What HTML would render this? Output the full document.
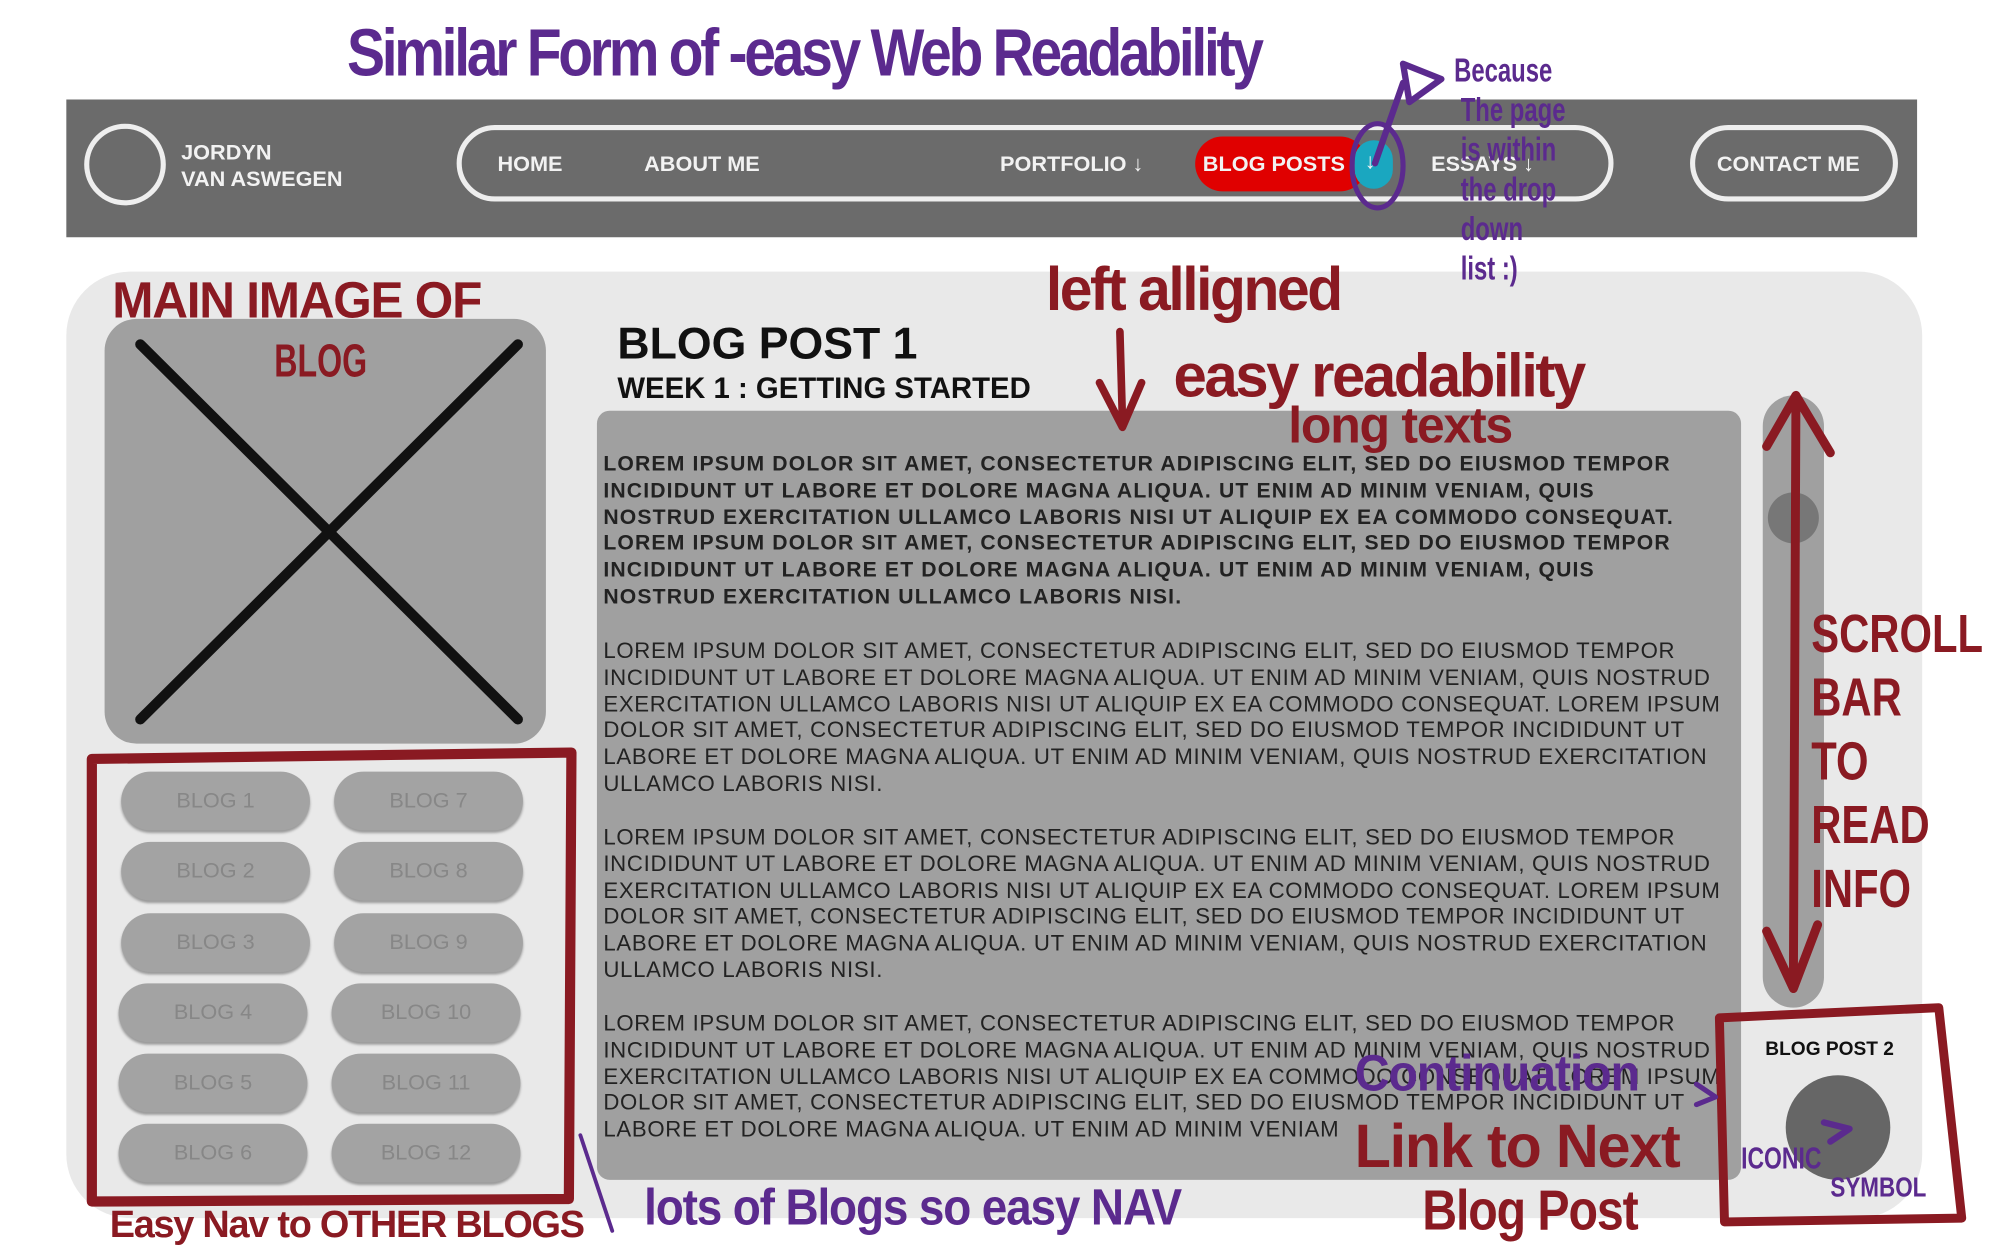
<!DOCTYPE html>
<html><head><meta charset="utf-8"><style>
html,body{margin:0;padding:0;background:#fff;width:2000px;height:1250px;overflow:hidden}
#s{position:absolute;left:0;top:0;width:1568px;height:980px;transform:scale(1.27551);transform-origin:0 0;font-family:"Liberation Sans",sans-serif}
.a{position:absolute}
.nav{left:52px;top:78px;width:1451px;height:108px;background:#6b6b6b}
.w{color:#f2f2f2;font-weight:bold;font-size:17px}
.pill{border:4px solid #eee;border-radius:32px;box-sizing:border-box}
.btn{width:148px;height:46px;background:#a3a3a3;border-radius:23px;color:#878787;font-size:17px;text-align:center;line-height:46px;box-shadow:0 2px 2px #999}
.txt{font-size:17.4px;line-height:20.8px;color:#222;text-transform:uppercase;letter-spacing:0.55px;white-space:nowrap}
.tb{font-size:16.6px;line-height:20.8px;color:#222;text-transform:uppercase;font-weight:bold;letter-spacing:0.9px;white-space:nowrap}
.p{color:#5b2a8e;font-weight:bold;transform-origin:0 0;white-space:nowrap}
.r{color:#8a1a22;font-weight:bold;transform-origin:0 0;white-space:nowrap}
</style></head><body><div id="s">
<div class="a nav"></div>
<div class="a" style="left:66px;top:97px;width:56px;height:56px;border:4px solid #eee;border-radius:50%"></div>
<div class="a w" style="left:142px;top:109px;line-height:21px">JORDYN<br>VAN ASWEGEN</div>
<div class="a pill" style="left:358px;top:98px;width:907px;height:60px"></div>
<div class="a w" style="left:390px;top:119px">HOME</div>
<div class="a w" style="left:505px;top:119px">ABOUT ME</div>
<div class="a w" style="left:784px;top:119px">PORTFOLIO ↓</div>
<div class="a" style="left:937px;top:107px;width:135px;height:43px;background:#e00000;border-radius:22px"></div>
<div class="a" style="left:1062px;top:110px;width:30px;height:38px;background:#1aa7c0;border-radius:15px"></div>
<div class="a w" style="left:943px;top:119px">BLOG POSTS</div>
<div class="a w" style="left:1070px;top:117px">↓</div>
<div class="a w" style="left:1122px;top:119px">ESSAYS ↓</div>
<div class="a pill" style="left:1325px;top:98px;width:163px;height:60px"></div>
<div class="a w" style="left:1346px;top:119px">CONTACT ME</div>

<div class="a" style="left:52px;top:213px;width:1455px;height:742px;background:#e9e9e9;border-radius:50px"></div>
<div class="a" style="left:82px;top:250px;width:346px;height:333px;background:#a0a0a0;border-radius:25px"></div>
<svg class="a" style="left:0;top:0" width="1568" height="980">
<line x1="110" y1="270" x2="406" y2="564" stroke="#111" stroke-width="8" stroke-linecap="round"/>
<line x1="406" y1="270" x2="110" y2="564" stroke="#111" stroke-width="8" stroke-linecap="round"/>
</svg>
<div class="a btn" style="left:95px;top:605px">BLOG 1</div><div class="a btn" style="left:262px;top:605px">BLOG 7</div>
<div class="a btn" style="left:95px;top:660px">BLOG 2</div><div class="a btn" style="left:262px;top:660px">BLOG 8</div>
<div class="a btn" style="left:95px;top:716px">BLOG 3</div><div class="a btn" style="left:262px;top:716px">BLOG 9</div>
<div class="a btn" style="left:93px;top:771px">BLOG 4</div><div class="a btn" style="left:260px;top:771px">BLOG 10</div>
<div class="a btn" style="left:93px;top:826px">BLOG 5</div><div class="a btn" style="left:260px;top:826px">BLOG 11</div>
<div class="a btn" style="left:93px;top:881px">BLOG 6</div><div class="a btn" style="left:260px;top:881px">BLOG 12</div>

<div class="a" style="left:484px;top:250px;font-size:35px;font-weight:bold;color:#111">BLOG POST 1</div>
<div class="a" style="left:484px;top:291px;font-size:23px;font-weight:bold;color:#111">WEEK 1 : GETTING STARTED</div>
<div class="a" style="left:468px;top:322px;width:897px;height:603px;background:#a0a0a0;border-radius:10px"></div>
<div class="a tb" style="left:473px;top:354px">Lorem ipsum dolor sit amet, consectetur adipiscing elit, sed do eiusmod tempor<br>incididunt ut labore et dolore magna aliqua. Ut enim ad minim veniam, quis<br>nostrud exercitation ullamco laboris nisi ut aliquip ex ea commodo consequat.<br>Lorem ipsum dolor sit amet, consectetur adipiscing elit, sed do eiusmod tempor<br>incididunt ut labore et dolore magna aliqua. Ut enim ad minim veniam, quis<br>nostrud exercitation ullamco laboris nisi.</div>
<div class="a txt" style="left:473px;top:500px">Lorem ipsum dolor sit amet, consectetur adipiscing elit, sed do eiusmod tempor<br>incididunt ut labore et dolore magna aliqua. Ut enim ad minim veniam, quis nostrud<br>exercitation ullamco laboris nisi ut aliquip ex ea commodo consequat. Lorem ipsum<br>dolor sit amet, consectetur adipiscing elit, sed do eiusmod tempor incididunt ut<br>labore et dolore magna aliqua. Ut enim ad minim veniam, quis nostrud exercitation<br>ullamco laboris nisi.</div>
<div class="a txt" style="left:473px;top:646px">Lorem ipsum dolor sit amet, consectetur adipiscing elit, sed do eiusmod tempor<br>incididunt ut labore et dolore magna aliqua. Ut enim ad minim veniam, quis nostrud<br>exercitation ullamco laboris nisi ut aliquip ex ea commodo consequat. Lorem ipsum<br>dolor sit amet, consectetur adipiscing elit, sed do eiusmod tempor incididunt ut<br>labore et dolore magna aliqua. Ut enim ad minim veniam, quis nostrud exercitation<br>ullamco laboris nisi.</div>
<div class="a txt" style="left:473px;top:792px">Lorem ipsum dolor sit amet, consectetur adipiscing elit, sed do eiusmod tempor<br>incididunt ut labore et dolore magna aliqua. Ut enim ad minim veniam, quis nostrud<br>exercitation ullamco laboris nisi ut aliquip ex ea commodo consequat. Lorem ipsum<br>dolor sit amet, consectetur adipiscing elit, sed do eiusmod tempor incididunt ut<br>labore et dolore magna aliqua. Ut enim ad minim veniam</div>

<div class="a" style="left:1382px;top:310px;width:48px;height:480px;background:#a0a0a0;border-radius:24px"></div>
<div class="a" style="left:1386px;top:386px;width:40px;height:40px;background:#777;border-radius:50%"></div>
<div class="a" style="left:1384px;top:814px;font-size:15px;font-weight:bold;color:#111">BLOG POST 2</div>
<div class="a" style="left:1400px;top:843px;width:82px;height:82px;background:#666;border-radius:50%"></div>

<svg class="a" style="left:0;top:0" width="1568" height="980" fill="none" stroke-linecap="round" stroke-linejoin="round">
<path d="M72 595 L448 590 L446 940 L72 942 Z" stroke="#8a1a22" stroke-width="8"/>
<path d="M1348 798 L1520 790 L1538 955 L1352 958 Z" stroke="#8a1a22" stroke-width="7"/>
<path d="M1408 315 L1406 775 M1385 350 L1408 310 L1435 355 M1385 730 L1406 775 L1425 725" stroke="#8a1a22" stroke-width="7"/>
<path d="M878 260 L880 330 M862 300 L880 335 L895 300" stroke="#8a1a22" stroke-width="6"/>
<path d="M1078 128 L1100 65 M1100 50 L1130 62 L1105 80 Z" stroke="#5b2a8e" stroke-width="5"/>
<ellipse cx="1080" cy="130" rx="20" ry="33" stroke="#5b2a8e" stroke-width="4"/>
<path d="M455 890 L480 965" stroke="#5b2a8e" stroke-width="3"/>
<path d="M1430 880 L1450 885 L1435 895" stroke="#5b2a8e" stroke-width="5"/>
<path d="M1330 850 L1345 860 L1330 866" stroke="#5b2a8e" stroke-width="4"/>
</svg>

<div class="a p" style="left:272px;top:12px;font-size:52px;letter-spacing:-3px;transform:scaleX(0.86)">Similar Form of -easy Web Readability</div>
<div class="a p" style="left:1140px;top:40px;font-size:26px;line-height:31px;transform:scaleX(0.72)">Because<br>&nbsp;The page<br>&nbsp;is within<br>&nbsp;the drop<br>&nbsp;down<br>&nbsp;list :)</div>
<div class="a r" style="left:88px;top:214px;font-size:40px;letter-spacing:-1px;transform:scaleX(0.97)">MAIN IMAGE OF</div>
<div class="a r" style="left:215px;top:262px;font-size:36px;transform:scaleX(0.7)">BLOG</div>
<div class="a r" style="left:820px;top:200px;font-size:48px;letter-spacing:-2px;transform:scaleX(0.96)">left alligned</div>
<div class="a r" style="left:920px;top:268px;font-size:48px;letter-spacing:-2px;transform:scaleX(0.98)">easy readability</div>
<div class="a r" style="left:1010px;top:312px;font-size:40px;letter-spacing:-1px;transform:scaleX(0.98)">long texts</div>
<div class="a r" style="left:1420px;top:472px;font-size:42px;line-height:50px;transform:scaleX(0.78)">SCROLL<br>BAR<br>TO<br>READ<br>INFO</div>
<div class="a p" style="left:1062px;top:820px;font-size:40px;letter-spacing:-1px;transform:scaleX(0.95)">Continuation</div>
<div class="a r" style="left:1062px;top:872px;font-size:48px;letter-spacing:-1px;transform:scaleX(0.97)">Link to Next</div>
<div class="a r" style="left:1115px;top:925px;font-size:44px;letter-spacing:-1px;transform:scaleX(0.86)">Blog Post</div>
<div class="a p" style="left:1365px;top:895px;font-size:24px;transform:scaleX(0.75)">ICONIC</div>
<div class="a p" style="left:1435px;top:918px;font-size:22px;transform:scaleX(0.8)">SYMBOL</div>
<div class="a r" style="left:86px;top:944px;font-size:30px;letter-spacing:-1px;transform:scaleX(0.99)">Easy Nav to OTHER BLOGS</div>
<div class="a p" style="left:505px;top:925px;font-size:40px;letter-spacing:-1px;transform:scaleX(0.9)">lots of Blogs so easy NAV</div>
</div></body></html>
